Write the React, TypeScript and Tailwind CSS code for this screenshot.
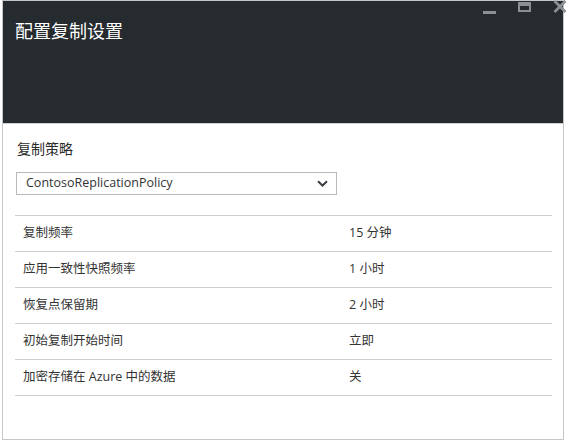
import React from 'react';

const rows: [string, string][] = [
  ['复制频率', '15 分钟'],
  ['应用一致性快照频率', '1 小时'],
  ['恢复点保留期', '2 小时'],
  ['初始复制开始时间', '立即'],
  ['加密存储在 Azure 中的数据', '关'],
];

const font = { fontFamily: '"Open Sans", "Noto Sans CJK SC", sans-serif' };

export default function App() {
  return (
    <div className="w-[566px] h-[442px] bg-white relative" style={font}>
      <div className="ml-[2px] w-[562px] h-[440px] border border-[#c6c6c6] flex flex-col">
        <div className="h-[122px] bg-[#262b30] px-[12px] pt-[16px]">
          <h1 className="text-[18px] leading-[28px] text-white">配置复制设置</h1>
        </div>
        <div className="border-t border-[#d0d0d0] pl-[12px] pr-[11px] pt-[15px]">
          <div className="pl-[2px] text-[14px] leading-[20px] text-[#2b2b2b]">复制策略</div>
          <div className="mt-[13px] ml-[1px] w-[321px] h-[23px] border border-[#b9b9b9] flex items-center justify-between pl-[9px] pr-[8px]">
            <span className="text-[12.5px] text-[#333]">ContosoReplicationPolicy</span>
            <svg width="11" height="7" viewBox="0 0 11 7" fill="none">
              <path d="M1 1.2 L5.5 5.5 L10 1.2" stroke="#3a3f44" strokeWidth="2" />
            </svg>
          </div>
          <div className="mt-[20px] border-t border-[#cfcfcf]">
            {rows.map(([label, value]) => (
              <div key={label} className="h-[36px] border-b border-[#cfcfcf] flex items-center text-[12.5px] text-[#333]">
                <span className="pl-[8px] w-[334px]">{label}</span>
                <span>{value}</span>
              </div>
            ))}
          </div>
        </div>
      </div>
      <div className="absolute left-[483px] top-[11px] w-[13px] h-[3px] bg-[#8b9095]" />
      <div className="absolute left-[518px] top-[2px] w-[13px] h-[10px] border-2 border-t-[4px] border-[#8b9095]" />
      <svg className="absolute left-[553px] top-[0px]" width="13" height="13" viewBox="0 0 13 13">
        <path d="M1.5 1 L12.5 12 M12.5 1 L1.5 12" stroke="#8b9095" strokeWidth="2.8" />
      </svg>
    </div>
  );
}
